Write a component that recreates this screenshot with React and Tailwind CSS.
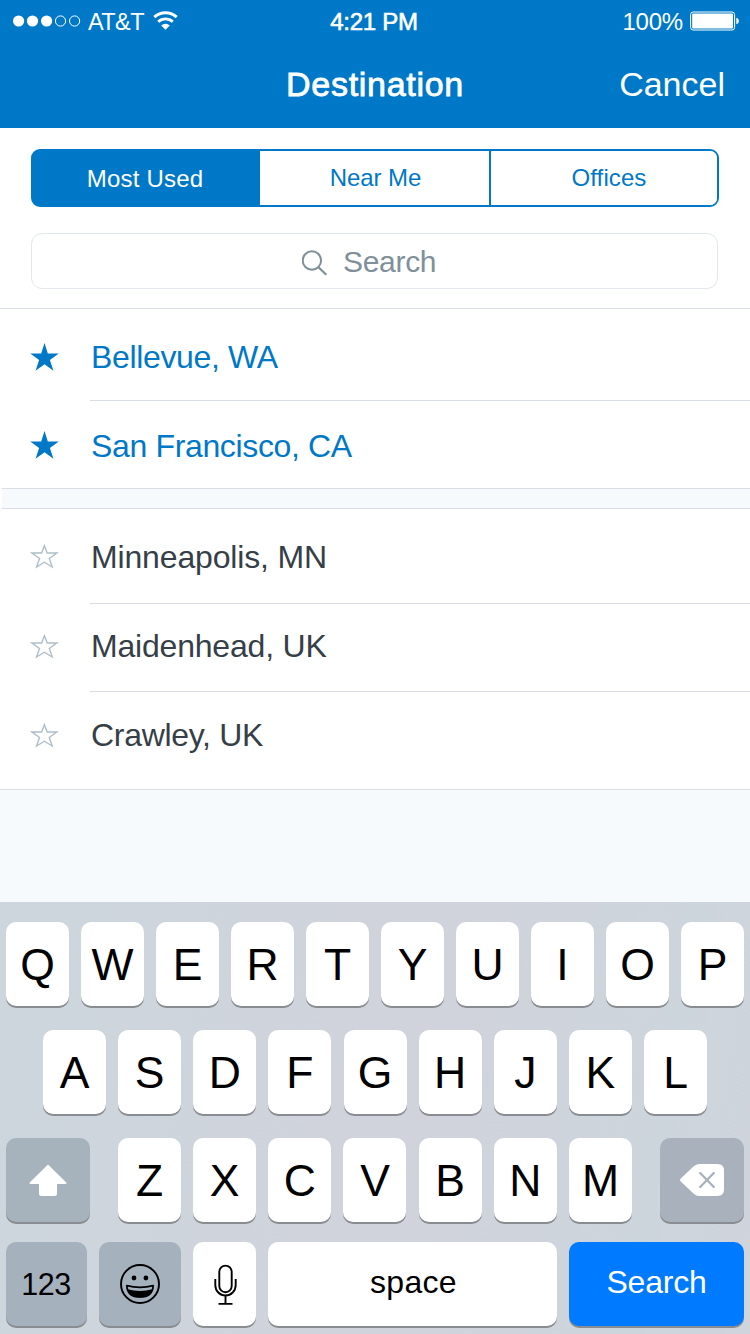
import React from "react";

function StatusBar() {
  return (
    <div className="grid h-[41px] grid-cols-3 items-center text-[24px] leading-[41px]">
      <div className="flex items-center pl-3">
        <svg width="70" height="14" viewBox="0 0 70 14" className="mr-[6px]">
          <circle cx="6.6" cy="7" r="5.6" fill="#fff" />
          <circle cx="20.5" cy="7" r="5.6" fill="#fff" />
          <circle cx="34.6" cy="7" r="5.6" fill="#fff" />
          <circle cx="48.5" cy="7" r="5.1" fill="none" stroke="#fff" />
          <circle cx="62.6" cy="7" r="5.1" fill="none" stroke="#fff" />
        </svg>
        <span className="w-[65px] pt-[2px] text-[23.5px] leading-[39px] tracking-[-0.6px]">AT&amp;T</span>
        <svg width="26" height="20" viewBox="0 0 26 20">
          <path d="M1.3 6.2a16.2 16.2 0 0 1 22.4 0" fill="none" stroke="#fff" strokeWidth="3" />
          <path d="M5.2 10.700a10.600 10.600 0 0 1 14.600 0" fill="none" stroke="#fff" strokeWidth="2.8" />
          <path d="M8.2 14.4a6.6 6.6 0 0 1 8.6 0L12.5 18.8z" fill="#fff" />
        </svg>
      </div>
      <div className="pr-[2px] text-center tracking-[-0.25px] [-webkit-text-stroke:0.6px_#fff]">4:21 PM</div>
      <div className="flex items-center justify-end pr-[10px]">
        <span className="mr-[7px] pt-[1px] tracking-[-0.2px]">100%</span>
        <svg width="50" height="20" viewBox="0 0 50 20">
          <rect x="0.6" y="1" width="44" height="18" rx="2.6" fill="none" stroke="#fff" />
          <rect x="2.2" y="2.6" width="40.8" height="14.8" rx="1" fill="#fff" />
          <path d="M46.3 6.8c3.4.8 3.4 5.600 0 6.400z" fill="#fff" />
        </svg>
      </div>
    </div>
  );
}

function Header() {
  return (
    <header className="h-[128px] bg-[#0078c8] text-white">
      <StatusBar />
      <div className="grid h-[87px] grid-cols-[1fr_auto_1fr] items-center text-[34px]">
        <span />
        <h1 className="tracking-[0.7px] [-webkit-text-stroke:0.8px_#fff]">Destination</h1>
        <span className="pr-[25px] text-right">Cancel</span>
      </div>
    </header>
  );
}

function Tabs() {
  return (
    <div className="mx-[31px] flex h-[58px] w-[688px] overflow-hidden rounded-[9px] border-2 border-[#0078c8] bg-[linear-gradient(90deg,#0078c8_50%,#fff_50%)] text-[24px] text-[#0078c8]">
      <button className="w-[227px] bg-[#0078c8] pt-[2px] pr-[3px] tracking-[0.2px] text-white">Most Used</button>
      <button className="w-[231px] border-r-2 border-[#0078c8] bg-white pl-[2px] tracking-[-0.1px]">Near Me</button>
      <button className="flex-1 bg-white pl-[10px] tracking-[0.1px]">Offices</button>
    </div>
  );
}

function SearchField() {
  return (
    <div className="mx-[31px] mt-[26px] flex h-[56px] w-[687px] items-center rounded-[11px] border border-[#e2e8ec] pl-[270px] text-[30px] text-[#7f9099]">
      <svg width="27" height="27" viewBox="0 0 27 27" className="mt-[5px] mr-[14px]" fill="none" stroke="#7f9099" strokeWidth="2">
        <circle cx="9.900" cy="10.500" r="9.200" />
        <path d="M16.500 17.200l7.800 7.600" strokeWidth="2.200" />
      </svg>
      <span className="tracking-[-0.3px]">Search</span>
    </div>
  );
}

function Star({ filled, className }) {
  return filled ? (
    <svg width="30" height="30" viewBox="0 0 30 30" className={className}>
      <path d="M14.500 1l3.300 10.500h11l-8.900 6.500 3.500 10.800-8.900-6.600-8.900 6.600 3.500-10.800L.3 11.500h10.900z" fill="#0078c8" />
    </svg>
  ) : (
    <svg width="30" height="30" viewBox="0 0 30 30" className={className}>
      <path d="M14.400 4.700L17.200 12H26.800L19.300 17.500L22.200 26L14.400 21.200L6.600 26L9.500 17.500L2 12H11.600z" fill="none" stroke="#afbec7" strokeWidth="1.400" />
    </svg>
  );
}

const favorites = [
  { name: "Bellevue, WA", row: "h-[91px] pt-[5px]", text: "tracking-[-0.35px]", star: "" },
  { name: "San Francisco, CA", row: "h-[87px] pt-[3px]", text: "tracking-[-0.35px]", star: "-mt-[2px]" },
];

const places = [
  { name: "Minneapolis, MN", row: "h-[94px] pt-[2px]", text: "tracking-[-0.15px]", star: "-mt-[3px]" },
  { name: "Maidenhead, UK", row: "h-[87px] pb-[4px]", text: "tracking-[-0.2px]", star: "" },
  { name: "Crawley, UK", row: "h-[97px] pb-[11px]", text: "tracking-[-0.3px]", star: "" },
];

function PlaceList({ items, filled }) {
  return (
    <ul className={filled ? "text-[#0078c8]" : "text-[#363f47]"}>
      {items.map((item, i) => (
        <li key={item.name}>
          {i > 0 && <div className="ml-[90px] h-px bg-[#dadde4]" />}
          <div className={`flex items-center pl-[30px] text-[32px] ${item.row}`}>
            <Star filled={filled} className={item.star} />
            <span className={`ml-[31px] ${item.text}`}>{item.name}</span>
          </div>
        </li>
      ))}
    </ul>
  );
}

function Key({ className = "", children }) {
  return (
    <button className={`flex h-[84px] items-center justify-center rounded-[10px] shadow-[0_2px_0_#898c90] ${className}`}>
      {children}
    </button>
  );
}

function Letters({ letters, className }) {
  return (
    <div className={`flex justify-between text-[44.5px] ${className}`}>
      {letters.split("").map((c) => (
        <Key key={c} className="w-[63px] bg-white pt-[2px]">{c}</Key>
      ))}
    </div>
  );
}

function Keyboard() {
  return (
    <div className="h-[432px] overflow-hidden bg-[linear-gradient(100deg,#cdd6dd_0%,#ced5dd_20%,#d0d3db_45%,#d0d3dc_60%,#cdd5dc_85%,#d0d4dc_100%)] px-[6px] pt-5 text-black">
      <Letters letters="QWERTYUIOP" className="" />
      <Letters letters="ASDFGHJKL" className="mx-[37px] mt-6" />
      <div className="mt-6 flex justify-between">
        <Key className="w-[84px] bg-[#a7b3bc]">
          <svg width="40" height="34" viewBox="0 0 40 34">
            <path d="M20 1.500L38.300 19.500q.8 1.300-.8 1.500H29v9.500q0 2.500-2.500 2.500h-13q-2.500 0-2.500-2.500V21H2.500q-1.600-.2-.8-1.500z" fill="#fff" />
          </svg>
        </Key>
        <Letters letters="ZXCVBNM" className="w-[514px]" />
        <Key className="w-[84px] bg-[#a9b2bc]">
          <svg width="44" height="32" viewBox="0 0 44 32">
            <path d="M.8 14.500L13.500 2.500Q16 0 19 0H37.500Q44 0 44 6.500V25.500Q44 32 37.500 32H19Q16 32 13.500 29.500L.8 17.500Q-.6 16 .8 14.500z" fill="#fff" />
            <path d="M20.200 9l13.600 14M33.800 9l-13.600 14" stroke="#a9b2bc" strokeWidth="2.300" strokeLinecap="round" />
          </svg>
        </Key>
      </div>
      <div className="mt-5 flex gap-3">
        <Key className="w-[81px] bg-[#a6b1be] pt-[1px] pr-[1px] text-[30.5px] tracking-[-0.5px]">123</Key>
        <Key className="w-[82px] bg-[#a6b1be]">
          <svg width="40" height="40" viewBox="0 0 40 40">
            <circle cx="20" cy="20" r="19" fill="none" stroke="#000" strokeWidth="1.900" />
            <circle cx="14" cy="14" r="2.400" />
            <circle cx="25.900" cy="14" r="2.400" />
            <path d="M6.800 21.600Q20 25.200 33.200 21.600Q32.600 33 20 33Q7.400 33 6.800 21.600z" fill="none" stroke="#000" strokeWidth="1.700" strokeLinejoin="round" />
            <path d="M7.500 25.300Q20 28.600 32.500 25.300Q30 33.400 20 33.400Q10 33.400 7.500 25.300z" />
          </svg>
        </Key>
        <Key className="w-[63px] bg-white">
          <svg width="24" height="42" viewBox="0 0 24 42" fill="none" stroke="#000" strokeWidth="1.900">
            <rect x="6.300" y="2.600" width="12.400" height="26.600" rx="6.200" />
            <path d="M2.300 16v6.300a10.200 10.200 0 0 0 20.400 0V16M12.500 32.500V41M5.500 40.900h14" />
          </svg>
        </Key>
        <Key className="w-[289px] bg-white pl-[2px] pb-[4px] text-[32px] tracking-[0.3px]">space</Key>
        <Key className="w-[175px] bg-[#007aff] pb-[4px] text-[32px] tracking-[-0.2px] text-white">Search</Key>
      </div>
    </div>
  );
}

export default function App() {
  return (
    <div className="h-[1334px] w-[750px] overflow-hidden bg-[#f6fafd] font-['Liberation_Sans',Arial,sans-serif]">
      <Header />
      <main className="h-[774px]">
        <section className="h-[180px] bg-white pt-[21px]">
          <Tabs />
          <SearchField />
        </section>
        <section className="border-t border-[#d8e0e6] bg-white">
          <PlaceList items={favorites} filled />
        </section>
        <div className="bg-white pl-[1px]">
          <div className="h-[21px] border-y border-[#dadde4] border-l border-l-white bg-[#f6fafd]" />
        </div>
        <section className="border-b border-[#dadde4] bg-white">
          <PlaceList items={places} />
        </section>
      </main>
      <Keyboard />
    </div>
  );
}
